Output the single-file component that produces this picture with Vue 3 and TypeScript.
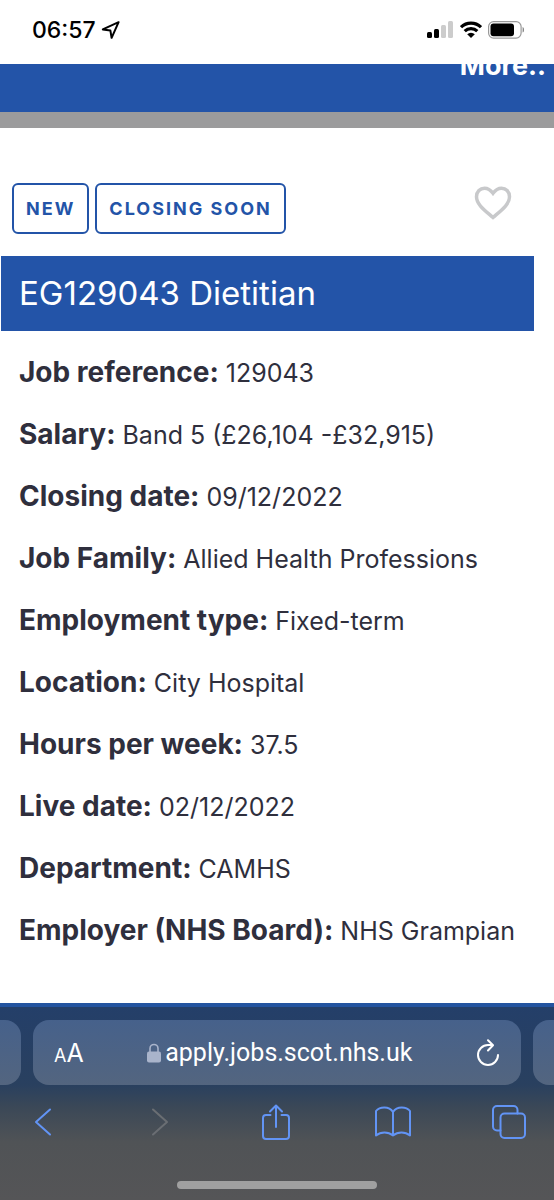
<script setup lang="ts">
interface Detail {
  label: string
  value: string
}

const tags: string[] = ['NEW', 'CLOSING SOON']

const details: Detail[] = [
  { label: 'Job reference:', value: '129043' },
  { label: 'Salary:', value: 'Band 5 (£26,104 -£32,915)' },
  { label: 'Closing date:', value: '09/12/2022' },
  { label: 'Job Family:', value: 'Allied Health Professions' },
  { label: 'Employment type:', value: 'Fixed-term' },
  { label: 'Location:', value: 'City Hospital' },
  { label: 'Hours per week:', value: '37.5' },
  { label: 'Live date:', value: '02/12/2022' },
  { label: 'Department:', value: 'CAMHS' },
  { label: 'Employer (NHS Board):', value: 'NHS Grampian' },
]
</script>

<template>
  <div class="screen">
    <header class="status">
      <div class="clock">
        <span>06:57</span>
        <svg width="20" height="20" viewBox="0 0 20 20" aria-hidden="true">
          <path d="M17.6 2.2 1.8 9.4l7.6 1.2 1.2 7.2z" fill="none" stroke="#000" stroke-width="2" stroke-linejoin="round" />
        </svg>
      </div>
      <div class="signals">
        <svg width="27" height="18" viewBox="0 0 27 18" aria-hidden="true">
          <rect x="0" y="11" width="5" height="6" rx="1.5" />
          <rect x="7" y="8" width="5" height="9" rx="1.5" />
          <rect x="14" y="4" width="5" height="13" rx="1.5" fill="#ccc" />
          <rect x="21" y="0" width="5" height="17" rx="1.5" fill="#ccc" />
        </svg>
        <svg width="22" height="18" viewBox="0 0 22 18" aria-hidden="true">
          <g fill="none" stroke="#000" stroke-width="3.2">
            <path d="M1 6.2a14.2 14.2 0 0 1 20 0" />
            <path d="M4.7 10.2a9 9 0 0 1 12.6 0" />
          </g>
          <path d="M11 17 7.2 13.2a5.400 5.400 0 0 1 7.600 0z" />
        </svg>
        <svg width="36" height="18" viewBox="0 0 36 18" aria-hidden="true">
          <rect x="0.6" y="0.6" width="32.5" height="16.5" rx="5" fill="none" stroke="#999" stroke-width="1.2" />
          <rect x="2.5" y="2.5" width="23.5" height="12.7" rx="3" />
          <path d="M34.6 6v5.6c2-.6 2-5 0-5.600z" fill="#888" />
        </svg>
      </div>
    </header>

    <div class="banner"><a href="#" class="more">More..</a></div>
    <div class="divider"></div>

    <main>
      <div class="tags">
        <span v-for="tag in tags" :key="tag" class="tag">{{ tag }}</span>
        <button class="save" type="button" aria-label="Save job">
          <svg width="38" height="35" viewBox="0 0 38 35" aria-hidden="true">
            <path d="M19 31.500C11 24.500 2.500 18.500 2.500 10.800 2.500 5.500 6.200 2.200 10.500 2.200c4 0 6.500 2.400 8.500 5.100 2-2.700 4.500-5.100 8.500-5.100 4.300 0 8 3.300 8 8.600C35.500 18.500 27 24.500 19 31.500z" fill="none" stroke="#c8c9cb" stroke-width="3.500" />
          </svg>
        </button>
      </div>
      <h1>EG129043 Dietitian</h1>
      <dl>
        <div v-for="item in details" :key="item.label" class="row">
          <dt>{{ item.label }}</dt>
          <dd>{{ item.value }}</dd>
        </div>
      </dl>
    </main>

    <footer>
      <div class="tabs">
        <div class="side left"></div>
        <div class="address">
          <button type="button" class="text-size" aria-label="Text size"><small>A</small>A</button>
          <a href="#" class="url">
            <svg width="14" height="20" viewBox="0 0 14 20" aria-hidden="true">
              <path d="M3 9V5.500a4 4 0 0 1 8 0V9" fill="none" stroke="#a9b4cb" stroke-width="1.600" />
              <rect x="0" y="8.500" width="14" height="11" rx="2" fill="#a9b4cb" />
            </svg>
            <span>apply.jobs.scot.nhs.uk</span>
          </a>
          <button type="button" class="reload" aria-label="Reload">
            <svg width="24" height="28" viewBox="0 0 24 28" fill="none" stroke="#fff" stroke-width="2" stroke-linecap="round" stroke-linejoin="round" aria-hidden="true">
              <path d="M22 16a10 10 0 1 1-10-10h4.500M12 1.300l5 5-5 5.200" />
            </svg>
          </button>
        </div>
        <div class="side right"></div>
      </div>
      <nav>
        <button type="button" aria-label="Back">
          <svg width="18" height="30" viewBox="0 0 18 30"><path d="M16 2.500 2 15l14 12.500" /></svg>
        </button>
        <button type="button" aria-label="Forward" disabled>
          <svg width="18" height="30" viewBox="0 0 18 30"><path d="m2 2.500 14 12.500L2 27.500" /></svg>
        </button>
        <button type="button" aria-label="Share">
          <svg width="30" height="38" viewBox="0 0 30 38"><path d="M9.500 12H5a3 3 0 0 0-3 3v18a3 3 0 0 0 3 3h20a3 3 0 0 0 3-3V15a3 3 0 0 0-3-3h-4.500M15 24V2.500M9 8.500l6-6 6 6" /></svg>
        </button>
        <button type="button" aria-label="Bookmarks">
          <svg width="38" height="32" viewBox="0 0 38 32"><path d="M19 6v23.500M19 6C15-.5 5.500.5 2 5v24.500c5-4 12-4 17 0 5-4 12-4 17 0V5C32.500.5 23-.5 19 6z" /></svg>
        </button>
        <button type="button" aria-label="Tabs">
          <svg width="36" height="36" viewBox="0 0 36 36"><rect x="9.500" y="9.500" width="24.500" height="24.500" rx="4" /><path d="M9.500 26.500H6a4 4 0 0 1-4-4V6a4 4 0 0 1 4-4h16.500a4 4 0 0 1 4 4v3.500" /></svg>
        </button>
      </nav>
      <div class="home"></div>
    </footer>
  </div>
</template>

<style>
body {
  margin: 0;
  background: #fff;
}
</style>

<style scoped>
* {
  box-sizing: border-box;
}
.screen {
  display: flex;
  flex-direction: column;
  min-height: 100vh;
  overflow: hidden;
  font-family: Inter, "Liberation Sans", sans-serif;
  color: #2f2f3d;
}
svg {
  display: block;
}
button {
  display: grid;
  place-items: center;
  padding: 0;
  border: 0;
  background: none;
  color: inherit;
  font: inherit;
}
a {
  color: inherit;
  text-decoration: none;
}
.status {
  display: flex;
  align-items: center;
  justify-content: space-between;
  height: 64px;
  padding: 0 30px 4px 32px;
  color: #000;
}
.clock {
  display: flex;
  align-items: center;
  gap: 5px;
  font-size: 23px;
  font-weight: 500;
}
.signals {
  display: flex;
  gap: 6px;
}
.banner {
  display: flex;
  justify-content: flex-end;
  height: 48px;
  padding-right: 8px;
  overflow: hidden;
  background: #2354a8;
}
.more {
  margin-top: -14px;
  color: #fff;
  font-size: 27px;
  font-weight: 700;
  line-height: 32px;
}
.divider {
  height: 16px;
  background: #9b9b9c;
}
.tags {
  display: flex;
  align-items: center;
  gap: 6px;
  margin-top: 55px;
  padding: 0 42px 0 12px;
}
.tag {
  padding: 0 12px;
  border: 2px solid #2354a8;
  border-radius: 6px;
  color: #2354a8;
  font-size: 18px;
  font-weight: 700;
  line-height: 47px;
  letter-spacing: 2px;
}
.save {
  margin: -10px 0 0 auto;
}
h1 {
  margin: 22px 20px 0 1px;
  padding: 0 18px;
  background: #2354a8;
  color: #fff;
  font-size: 33px;
  font-weight: 400;
  line-height: 75px;
}
dl {
  margin: 0;
  padding: 10px 19px 42px;
}
.row {
  display: flex;
  align-items: baseline;
  gap: 7px;
  height: 62px;
  line-height: 62px;
  white-space: nowrap;
}
dt {
  font-size: 28px;
  font-weight: 700;
}
dd {
  margin: 0;
  font-size: 25px;
}
footer {
  display: flex;
  flex: 1;
  flex-direction: column;
  border-top: 4px solid #2354a0;
  background: linear-gradient(#243f69 0, #29405f 40%, #3b4857 52%, #505356 70%, #555557 100%);
}
.tabs {
  display: flex;
  gap: 12px;
  margin-top: 13px;
}
.side,
.address {
  height: 65px;
  background: linear-gradient(#46618b, #53657f);
}
.side {
  width: 21px;
}
.left {
  border-radius: 0 16px 16px 0;
}
.right {
  border-radius: 16px 0 0 16px;
}
.address {
  display: flex;
  flex: 1;
  align-items: center;
  justify-content: space-between;
  padding: 0 21px;
  border-radius: 16px;
  color: #fff;
}
.text-size {
  display: block;
  font-size: 25px;
}
.text-size small {
  font-size: 18px;
}
.url {
  display: flex;
  align-items: center;
  gap: 4px;
  font-family: Roboto, sans-serif;
  font-size: 25px;
}
nav {
  display: flex;
  justify-content: space-between;
  margin-top: 17px;
  padding: 0 25px 0 23px;
}
nav button {
  width: 40px;
  height: 40px;
}
nav svg {
  fill: none;
  stroke: #6294f5;
  stroke-width: 2;
  stroke-linecap: round;
  stroke-linejoin: round;
}
nav button:disabled svg {
  stroke: #6a6e73;
}
.home {
  width: 36%;
  height: 8px;
  margin: auto auto 11px;
  border-radius: 4px;
  background: #a0a0a0;
}
</style>
